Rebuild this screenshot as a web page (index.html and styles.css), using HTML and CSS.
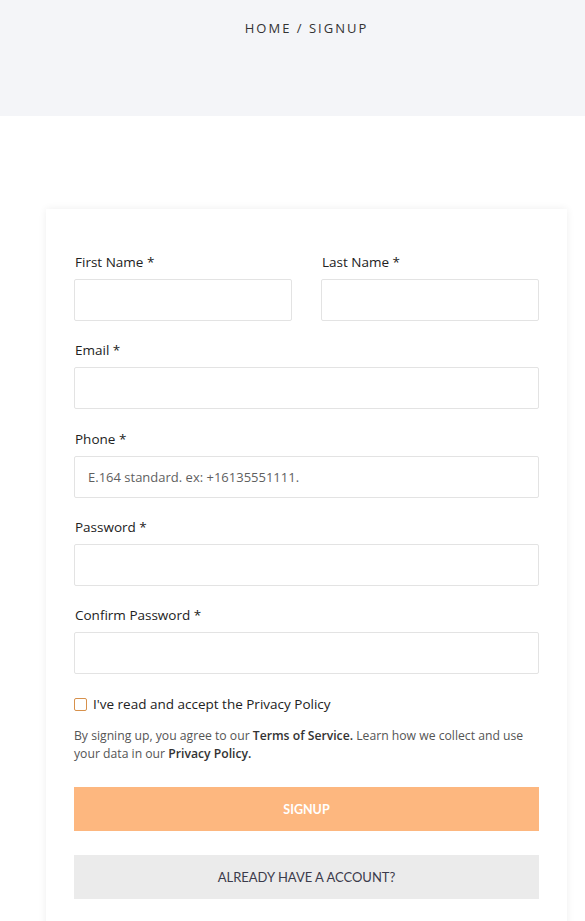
FILE: index.html
```html
<!DOCTYPE html>
<html>
<head>
<meta charset="utf-8">
<link rel="stylesheet" href="styles.css">
</head>
<body>
<header class="banner">
  <div class="crumbs">HOME / SIGNUP</div>
</header>
<main class="page">
  <form class="card">
    <div class="row two">
      <div class="field">
        <label class="lbl">First Name *</label>
        <input class="inp" type="text">
      </div>
      <div class="field">
        <label class="lbl">Last Name *</label>
        <input class="inp" type="text">
      </div>
    </div>
    <div class="field">
      <label class="lbl">Email *</label>
      <input class="inp" type="text">
    </div>
    <div class="field">
      <label class="lbl">Phone *</label>
      <input class="inp" type="text" placeholder="E.164 standard. ex: +16135551111.">
    </div>
    <div class="field">
      <label class="lbl">Password *</label>
      <input class="inp" type="password">
    </div>
    <div class="field">
      <label class="lbl">Confirm Password *</label>
      <input class="inp" type="password">
    </div>
    <label class="check"><span class="box"></span><span>I've read and accept the Privacy Policy</span></label>
    <p class="terms">By signing up, you agree to our <b>Terms of Service.</b> Learn how we collect and use your data in our <b>Privacy Policy.</b></p>
    <button type="button" class="btn primary">SIGNUP</button>
    <button type="button" class="btn secondary">ALREADY HAVE A ACCOUNT?</button>
  </form>
</main>
</body>
</html>
```
FILE: styles.css
```css
* { box-sizing: border-box; }
html, body { margin: 0; padding: 0; }
body {
  background: #fff;
  font-family: "Open Sans", "Liberation Sans", sans-serif;
  color: #222;
  width: 585px;
  height: 921px;
  overflow: hidden;
}
.banner {
  height: 116px;
  background: #f4f5f8;
  display: flex;
  justify-content: center;
  padding-top: 19px;
}
.crumbs {
  font-size: 13px;
  letter-spacing: 2px;
  color: #333;
  line-height: 18px;
  margin-left: 28px;
}
.page {
  padding: 93px 18px 0 46px;
}
.card {
  background: #fff;
  box-shadow: 0 0 8px rgba(0,0,0,0.07);
  padding: 43px 28px 40px 28px;
  display: flex;
  flex-direction: column;
}
.row.two {
  display: grid;
  grid-template-columns: 1fr 1fr;
  column-gap: 29px;
}
.field {
  display: flex;
  flex-direction: column;
  margin-bottom: 19.3px;
}
.lbl {
  font-size: 13.5px;
  font-weight: 500;
  color: #222;
  line-height: 20px;
  margin-bottom: 7px;
  padding-left: 1px;
}
.inp {
  height: 42px;
  border: 1px solid #e3e3e3;
  border-radius: 2px;
  background: #fff;
  padding: 0 13px;
  font-family: "Open Sans", "Liberation Sans", sans-serif;
  font-size: 13px;
  color: #333;
  outline: none;
}
.inp::placeholder { color: #5f5f5f; }
.check {
  display: flex;
  align-items: center;
  gap: 6px;
  font-size: 13.5px;
  font-weight: 500;
  color: #222;
  line-height: 20px;
  margin-top: 1px;
  margin-bottom: 13px;
}
.box {
  width: 13px;
  height: 13px;
  border: 1.5px solid #d7914c;
  border-radius: 2px;
  display: inline-block;
}
.terms {
  margin: 0 0 24px 0;
  font-size: 12.2px;
  line-height: 18px;
  color: #555;
}
.terms b { font-weight: 600; color: #333; }
.btn {
  border: none;
  height: 44px;
  width: 100%;
  font-family: "Lato", "Open Sans", sans-serif;
  font-size: 12.5px;
  cursor: pointer;
}
.primary {
  background: #fdb77f;
  color: #fff;
  font-weight: 700;
  margin-bottom: 24px;
}
.secondary {
  background: #ebebeb;
  color: #3b3b4b;
  font-size: 13px;
}
```
